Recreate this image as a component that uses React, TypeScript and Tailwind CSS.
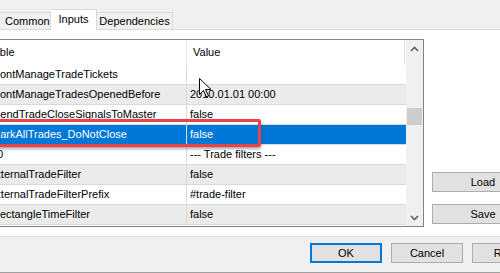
import React from "react";

type Row = { name: string; off: number; value: string; kind: "white" | "gray" | "sel" };

const rows: Row[] = [
  { name: "DontManageTradeTickets", off: -8, value: "", kind: "white" },
  { name: "DontManageTradesOpenedBefore", off: -8, value: "2010.01.01 00:00", kind: "gray" },
  { name: "SendTradeCloseSignalsToMaster", off: -7, value: "false", kind: "white" },
  { name: "MarkAllTrades_DoNotClose", off: -9, value: "false", kind: "sel" },
  { name: "0", off: -3, value: "--- Trade filters ---", kind: "white" },
  { name: "ExternalTradeFilter", off: -12, value: "false", kind: "gray" },
  { name: "ExternalTradeFilterPrefix", off: -12, value: "#trade-filter", kind: "white" },
  { name: "RectangleTimeFilter", off: -8, value: "false", kind: "gray" },
];

function Chevron({ up }: { up: boolean }) {
  return (
    <svg width="9" height="6" viewBox="0 0 9 6">
      <polyline
        points={up ? "1,5 4.5,1.5 8,5" : "1,1 4.5,4.5 8,1"}
        fill="none"
        stroke="#606060"
        strokeWidth="1.6"
      />
    </svg>
  );
}

export default function App() {
  return (
    <div className="relative w-[500px] h-[273px] overflow-hidden bg-[#f0f0f0] text-[11px] text-black font-['Liberation_Sans',Arial,sans-serif]">
      {/* tab strip */}
      <div className="h-[30px] flex items-end border-b border-[#d9d9d9]">
        <div className="w-[51px] h-[17px] border-t border-r border-[#d9d9d9] flex items-center pl-[5px]">
          Common
        </div>
        <div className="w-[46px] h-[21px] -mb-px bg-white border-t border-r border-[#d9d9d9] flex items-center justify-center pb-[2px]">
          Inputs
        </div>
        <div className="w-[76px] h-[17px] border-t border-r border-[#d9d9d9] flex items-center justify-center">
          Dependencies
        </div>
      </div>

      {/* panel */}
      <div className="h-[207px] bg-white border-b border-[#d9d9d9] flex">
        <div className="mt-[9px] w-[424px] h-[188px] shrink-0 border border-l-0 border-[#828282] flex">
          {/* list */}
          <div className="w-[406px] flex flex-col">
            <div className="h-[25px] flex">
              <div className="w-[187px] border-r border-[#e5e5e5] overflow-hidden flex items-center">
                <span className="whitespace-nowrap ml-[-25px]">Variable</span>
              </div>
              <div className="w-[218px] border-r border-[#e5e5e5] flex items-center pl-[6px]">Value</div>
            </div>
            {rows.map((r, i) => (
              <div
                key={i}
                className={
                  "h-[20px] flex border-b border-[#d9d9d9] " +
                  (r.kind === "sel"
                    ? "bg-[#0078d7] text-white"
                    : r.kind === "gray"
                    ? "bg-[#ebebeb]"
                    : "bg-white")
                }
              >
                <div className="w-[187px] border-r border-[#d9d9d9] overflow-hidden flex items-center">
                  <span className="whitespace-nowrap" style={{ marginLeft: r.off }}>
                    {r.name}
                  </span>
                </div>
                <div className="flex-1 flex items-center pl-[3px] whitespace-nowrap">{r.value}</div>
              </div>
            ))}
          </div>
          {/* scrollbar */}
          <div className="w-[17px] bg-[#f0f0f0] flex flex-col items-center">
            <div className="h-[17px] flex items-center justify-center">
              <Chevron up />
            </div>
            <div className="flex-1 w-full flex flex-col items-center">
              <div className="mt-[51px] w-[15px] h-[17px] bg-[#cdcdcd]" />
            </div>
            <div className="h-[17px] flex items-center justify-center">
              <Chevron up={false} />
            </div>
          </div>
        </div>
        <div className="flex-1 flex flex-col items-end pt-[142px] mr-[-34px] gap-[12px]">
          <div className="w-[102px] h-[20px] bg-[#e1e1e1] border border-[#adadad] flex items-center justify-center">
            Load
          </div>
          <div className="w-[102px] h-[20px] bg-[#e1e1e1] border border-[#adadad] flex items-center justify-center">
            Save
          </div>
        </div>
      </div>

      {/* bottom buttons */}
      <div className="h-[36px] border-b border-[#a0a0a0] flex justify-end items-start pt-[6px] gap-[9px] mr-[-44px]">
        <div className="w-[72px] h-[20px] bg-[#e1e1e1] border-2 border-[#0078d7] flex items-center justify-center">
          OK
        </div>
        <div className="w-[72px] h-[20px] bg-[#e1e1e1] border border-[#adadad] flex items-center justify-center">
          Cancel
        </div>
        <div className="w-[72px] h-[20px] bg-[#e1e1e1] border border-[#adadad] flex items-center justify-center">
          Reset
        </div>
      </div>

      {/* red annotation box */}
      <div className="absolute left-[-10px] top-[119px] w-[271px] h-[28px] border-[3px] border-[#e8434b] rounded-[2px] shadow-[0_2px_3px_rgba(0,0,0,0.35)]" />

      {/* mouse cursor */}
      <svg className="absolute left-[199px] top-[78px]" width="13" height="20" viewBox="0 0 13 20">
        <path
          d="M0.5 0.5 L0.5 16.5 L4.5 12.5 L7.5 19 L9.5 18 L6.5 11.5 L12 11.5 Z"
          fill="white"
          stroke="black"
          strokeWidth="1"
          strokeLinejoin="miter"
        />
      </svg>
    </div>
  );
}
